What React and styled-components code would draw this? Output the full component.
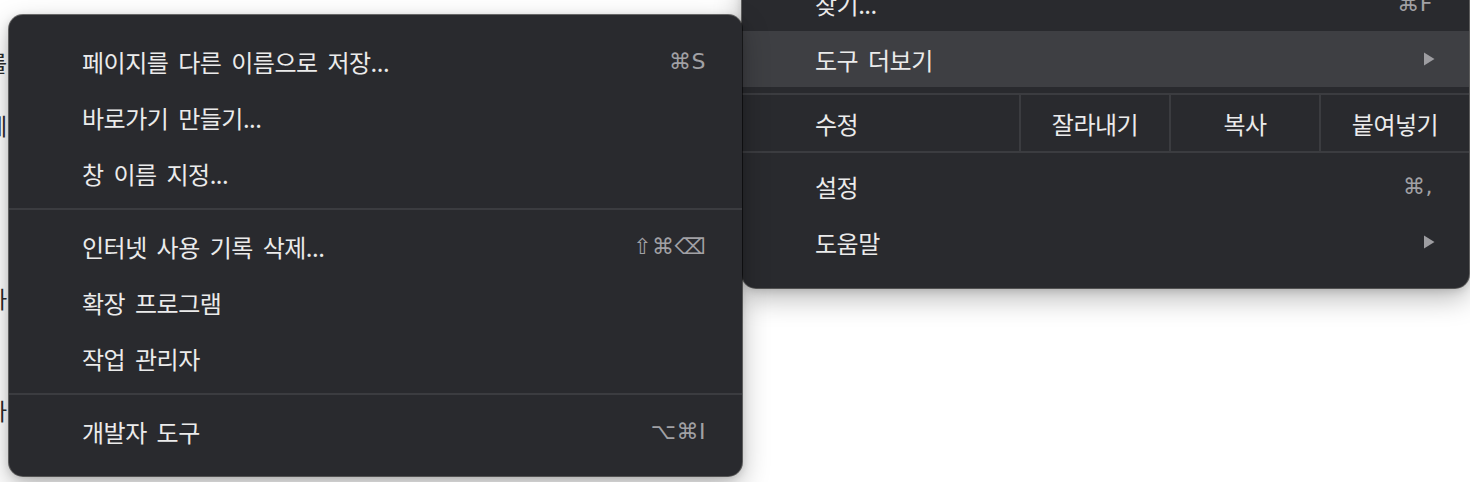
import React from "react";
import styled, { createGlobalStyle } from "styled-components";

const Global = createGlobalStyle`
  html, body { margin: 0; padding: 0; background: #ffffff; overflow: hidden; }
  body { font-family: "Noto Sans CJK KR", "Noto Sans", sans-serif; }
`;

const Stage = styled.div`
  position: relative;
  width: 1470px;
  height: 482px;
  overflow: hidden;
  background: #ffffff;
`;

const PageText = styled.div`
  display: flex;
  flex-direction: column;
  margin-left: -14px;
  font-size: 23px;
  color: #2b2b2b;
  font-family: "Noto Sans CJK KR", sans-serif;
`;

const PageLine = styled.div`
  height: 30px;
  line-height: 30px;
  margin-top: ${(p) => p.$gap}px;
  white-space: nowrap;
`;

const Menu = styled.div`
  position: absolute;
  left: ${(p) => p.$left}px;
  top: ${(p) => p.$top}px;
  width: ${(p) => p.$width}px;
  padding: ${(p) => p.$pad};
  box-sizing: border-box;
  background: #292a2e;
  border-radius: 14px;
  box-shadow: 0 0 0 1px rgba(0, 0, 0, 0.55), 0 10px 28px rgba(0, 0, 0, 0.28),
    0 2px 8px rgba(0, 0, 0, 0.15);
  display: flex;
  flex-direction: column;
  z-index: ${(p) => p.$z};
`;

const Item = styled.div`
  height: 56px;
  display: flex;
  align-items: center;
  padding: 0 36px 0 73px;
  background: ${(p) => (p.$active ? "#3e3f43" : "transparent")};
  color: #ebebeb;
  font-size: 24px;
`;

const Label = styled.span`
  flex: 1;
  white-space: nowrap;
  letter-spacing: -0.5px;
  word-spacing: 5px;
`;

const Shortcut = styled.span`
  font-family: "DejaVu Sans", sans-serif;
  font-size: 22px;
  color: #a1a1a5;
  letter-spacing: 0.5px;
  white-space: nowrap;
`;

const Separator = styled.div`
  height: 2px;
  background: #3b3c40;
  margin: ${(p) => p.$m};
`;

const EditRow = styled.div`
  height: 56px;
  display: flex;
  align-items: stretch;
  color: #ebebeb;
  font-size: 24px;
  letter-spacing: -0.5px;
`;

const EditLabel = styled.div`
  flex: 1;
  display: flex;
  align-items: center;
  padding-left: 73px;
`;

const EditCell = styled.div`
  width: 148px;
  border-left: 2px solid #3b3c40;
  display: flex;
  align-items: center;
  justify-content: center;
`;

const Arrow = () => (
  <svg width="12" height="14" viewBox="0 0 12 14" style={{ marginRight: -2 }}>
    <path d="M1 0.5 L11.5 7 L1 13.5 Z" fill="#9d9da1" />
  </svg>
);

export default function App() {
  return (
    <Stage>
      <Global />
      <PageText>
        <PageLine $gap={47}>를</PageLine>
        <PageLine $gap={33}>세</PageLine>
        <PageLine $gap={143}>하</PageLine>
        <PageLine $gap={82}>가</PageLine>
      </PageText>

      <Menu $left={742} $top={-25} $width={727} $pad="0 0 18px 0" $z={1}>
        <Item>
          <Label>찾기...</Label>
          <Shortcut>⌘F</Shortcut>
        </Item>
        <Item $active>
          <Label>도구 더보기</Label>
          <Arrow />
        </Item>
        <Separator $m="6px 0 0 0" />
        <EditRow>
          <EditLabel>수정</EditLabel>
          <EditCell>잘라내기</EditCell>
          <EditCell>복사</EditCell>
          <EditCell>붙여넣기</EditCell>
        </EditRow>
        <Separator $m="0 0 5px 0" />
        <Item>
          <Label>설정</Label>
          <Shortcut>⌘,</Shortcut>
        </Item>
        <Item>
          <Label>도움말</Label>
          <Arrow />
        </Item>
      </Menu>

      <Menu $left={9} $top={15} $width={733} $pad="18px 0 17px 0" $z={2}>
        <Item>
          <Label>페이지를 다른 이름으로 저장...</Label>
          <Shortcut>⌘S</Shortcut>
        </Item>
        <Item>
          <Label>바로가기 만들기...</Label>
        </Item>
        <Item>
          <Label>창 이름 지정...</Label>
        </Item>
        <Separator $m="7px 0 8px 0" />
        <Item>
          <Label>인터넷 사용 기록 삭제...</Label>
          <Shortcut>⇧⌘⌫</Shortcut>
        </Item>
        <Item>
          <Label>확장 프로그램</Label>
        </Item>
        <Item>
          <Label>작업 관리자</Label>
        </Item>
        <Separator $m="7px 0 8px 0" />
        <Item>
          <Label>개발자 도구</Label>
          <Shortcut>⌥⌘I</Shortcut>
        </Item>
      </Menu>
    </Stage>
  );
}
